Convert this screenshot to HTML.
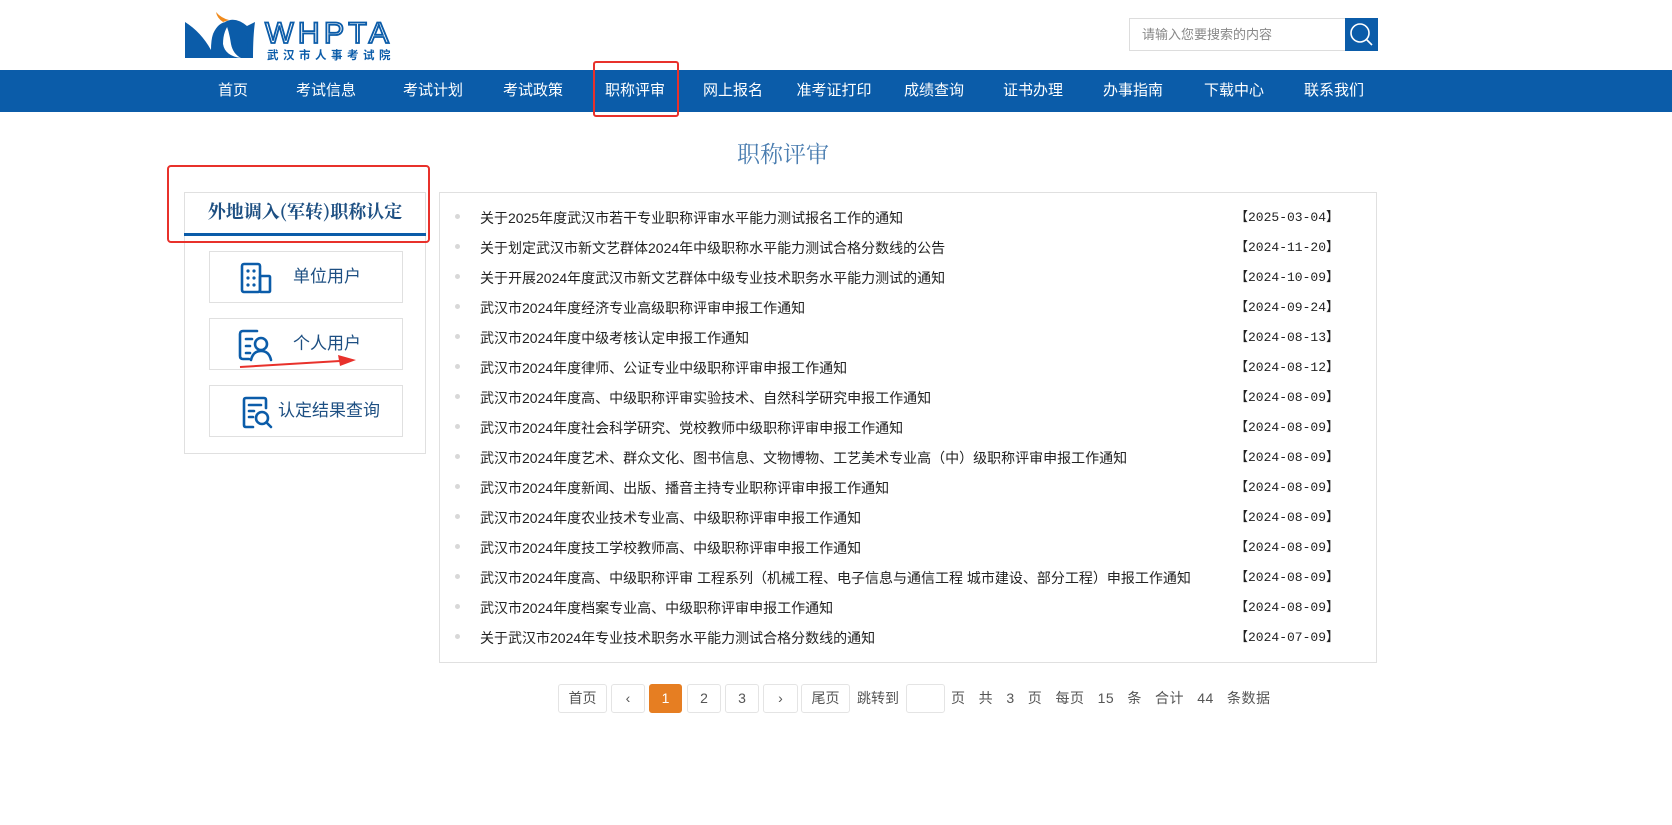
<!DOCTYPE html>
<html><head><meta charset="utf-8"><style>
*{margin:0;padding:0;box-sizing:border-box}
body{width:1672px;height:825px;background:#fff;font-family:"Liberation Sans","Noto Sans CJK SC",sans-serif;position:relative;overflow:hidden;color:#222}
.abs{position:absolute}
.nav{left:0;top:70px;width:1672px;height:42px;background:#0b5ca9}
.nav div{position:absolute;top:0;width:100px;height:42px;line-height:42px;text-align:center;color:#fff;font-size:15px}
.list{left:439px;top:192px;width:938px;height:471px;border:1px solid #e0e0e0}
.row{position:absolute;left:0;width:938px;height:30px;font-size:14px;line-height:30px}
.row .b{position:absolute;left:15px;top:11px;width:5px;height:5px;border-radius:50%;background:#d8d8d8}
.row .t{position:absolute;left:40px;top:0;white-space:nowrap}
.row .d{position:absolute;left:795px;top:0;white-space:nowrap;font-family:"Liberation Mono","Noto Sans CJK SC",monospace;font-size:13px}
.btn{position:absolute;left:209px;width:194px;height:52px;border:1px solid #e0e0e0;background:#fff}
.btn span{position:absolute;top:0;line-height:50px;font-size:17px;color:#1d4f82}
.pg{position:absolute;top:684px;height:29px;border:1px solid #e4e4e4;border-radius:3px;text-align:center;line-height:27px;font-size:14px;color:#555;background:#fff}
</style></head><body>
<svg class="abs" style="left:183px;top:10px" width="220" height="52" viewBox="0 0 220 52">
<path d="M2 12 Q18 22 28 40 Q28 30 30 24 Q36 38 46 48 L2 48 Z" fill="#0b5ca9"/>
<path d="M30 24 Q36 10 48 12 Q40 20 40 34 Q42 46 58 48 L46 48 Q34 40 30 24Z" fill="#0b5ca9"/>
<path d="M42 12 Q52 6 64 16 Q70 28 70 48 L58 48 Q50 44 48 34 Q46 20 42 12Z" fill="#0b5ca9"/>
<path d="M60 18 Q68 14 72 12 Q70 26 70 48 L62 48 Q68 36 60 18Z" fill="#0b5ca9"/>
<path d="M33 2 Q38 8 46 10 L40 12 Q34 8 33 2Z" fill="#f08a1c"/>
<text x="82" y="33" font-family="Liberation Sans" font-size="30" fill="#fff" stroke="#0b5ca9" stroke-width="1.8" letter-spacing="4" textLength="128" lengthAdjust="spacingAndGlyphs">WHPTA</text>
<text x="84" y="49" font-family="Noto Sans CJK SC" font-size="11.5" font-weight="bold" fill="#0b5ca9" letter-spacing="4.5">武汉市人事考试院</text>
</svg>
<div class="abs" style="left:1129px;top:18px;width:217px;height:33px;border:1px solid #ddd;font-size:13px;color:#888;line-height:31px;padding-left:12px">请输入您要搜索的内容</div>
<div class="abs" style="left:1345px;top:18px;width:33px;height:33px;background:#0b5ca9">
<svg width="33" height="33"><circle cx="15" cy="15" r="9" fill="none" stroke="#fff" stroke-width="1.6"/><line x1="21.5" y1="21.5" x2="27" y2="27" stroke="#fff" stroke-width="1.6"/></svg></div>
<div class="abs nav">
<div style="left:183px">首页</div><div style="left:276px">考试信息</div><div style="left:383px">考试计划</div><div style="left:483px">考试政策</div><div style="left:585px">职称评审</div><div style="left:683px">网上报名</div><div style="left:784px">准考证打印</div><div style="left:884px">成绩查询</div><div style="left:983px">证书办理</div><div style="left:1083px">办事指南</div><div style="left:1184px">下载中心</div><div style="left:1284px">联系我们</div>
</div>
<div class="abs" style="left:593px;top:61px;width:86px;height:56px;border:2px solid #e8312b;border-radius:3px"></div>
<div class="abs" style="left:683px;top:136px;width:200px;text-align:center;font-size:23px;color:#4a7db0;font-family:'Noto Serif CJK SC',serif">职称评审</div>
<div class="abs" style="left:184px;top:192px;width:242px;height:262px;border:1px solid #e0e0e0"></div>
<div class="abs" style="left:184px;top:198px;width:242px;text-align:center;font-size:18px;font-weight:bold;color:#1d4f82;font-family:'Noto Serif CJK SC',serif">外地调入(军转)职称认定</div>
<div class="abs" style="left:184px;top:233px;width:242px;height:3px;background:#0b5ca9"></div>
<div class="abs" style="left:167px;top:165px;width:263px;height:78px;border:2px solid #e8312b;border-radius:4px"></div>
<div class="btn" style="top:251px">
<svg class="abs" style="left:29px;top:9px" width="34" height="34" viewBox="0 0 34 34" fill="none" stroke="#0b5ca9" stroke-width="2.6"><rect x="3" y="3" width="18" height="28" rx="2"/><rect x="21" y="15" width="10" height="16" rx="1"/><g fill="#0b5ca9" stroke="none"><circle cx="9" cy="10" r="1.6"/><circle cx="15" cy="10" r="1.6"/><circle cx="9" cy="17" r="1.6"/><circle cx="15" cy="17" r="1.6"/><circle cx="9" cy="24" r="1.6"/><circle cx="15" cy="24" r="1.6"/></g></svg>
<span style="left:83px">单位用户</span></div>
<div class="btn" style="top:318px">
<svg class="abs" style="left:27px;top:9px" width="38" height="34" viewBox="0 0 38 34" fill="none" stroke="#0b5ca9" stroke-width="2.6" stroke-linecap="round"><path d="M20 3 H6 Q3 3 3 6 V28 Q3 31 6 31 H12"/><path d="M9 11 H15 M9 18 H13 M9 25 H13"/><circle cx="24" cy="16" r="6"/><path d="M14 32 Q16 23 24 23 Q32 23 34 32"/></svg>
<span style="left:83px">个人用户</span></div>
<div class="btn" style="top:385px">
<svg class="abs" style="left:31px;top:9px" width="34" height="36" viewBox="0 0 34 36" fill="none" stroke="#0b5ca9" stroke-width="2.6" stroke-linecap="round"><path d="M12 32 H5 Q3 32 3 30 V5 Q3 3 5 3 H23 Q25 3 25 5 V13"/><path d="M8 10 H20 M8 16 H13 M8 22 H12"/><circle cx="21" cy="23" r="6"/><path d="M25.5 27.5 L30 32"/></svg>
<span style="left:68px">认定结果查询</span></div>
<svg class="abs" style="left:238px;top:352px" width="122" height="20"><path d="M2 15 L102 9" stroke="#e8312b" stroke-width="2"/><path d="M118 8 L100 3 L102 14 Z" fill="#e8312b"/></svg>
<div class="abs list">
<div class="row" style="top:10px"><i class="b"></i><span class="t">关于2025年度武汉市若干专业职称评审水平能力测试报名工作的通知</span><span class="d">【2025-03-04】</span></div>
<div class="row" style="top:40px"><i class="b"></i><span class="t">关于划定武汉市新文艺群体2024年中级职称水平能力测试合格分数线的公告</span><span class="d">【2024-11-20】</span></div>
<div class="row" style="top:70px"><i class="b"></i><span class="t">关于开展2024年度武汉市新文艺群体中级专业技术职务水平能力测试的通知</span><span class="d">【2024-10-09】</span></div>
<div class="row" style="top:100px"><i class="b"></i><span class="t">武汉市2024年度经济专业高级职称评审申报工作通知</span><span class="d">【2024-09-24】</span></div>
<div class="row" style="top:130px"><i class="b"></i><span class="t">武汉市2024年度中级考核认定申报工作通知</span><span class="d">【2024-08-13】</span></div>
<div class="row" style="top:160px"><i class="b"></i><span class="t">武汉市2024年度律师、公证专业中级职称评审申报工作通知</span><span class="d">【2024-08-12】</span></div>
<div class="row" style="top:190px"><i class="b"></i><span class="t">武汉市2024年度高、中级职称评审实验技术、自然科学研究申报工作通知</span><span class="d">【2024-08-09】</span></div>
<div class="row" style="top:220px"><i class="b"></i><span class="t">武汉市2024年度社会科学研究、党校教师中级职称评审申报工作通知</span><span class="d">【2024-08-09】</span></div>
<div class="row" style="top:250px"><i class="b"></i><span class="t">武汉市2024年度艺术、群众文化、图书信息、文物博物、工艺美术专业高（中）级职称评审申报工作通知</span><span class="d">【2024-08-09】</span></div>
<div class="row" style="top:280px"><i class="b"></i><span class="t">武汉市2024年度新闻、出版、播音主持专业职称评审申报工作通知</span><span class="d">【2024-08-09】</span></div>
<div class="row" style="top:310px"><i class="b"></i><span class="t">武汉市2024年度农业技术专业高、中级职称评审申报工作通知</span><span class="d">【2024-08-09】</span></div>
<div class="row" style="top:340px"><i class="b"></i><span class="t">武汉市2024年度技工学校教师高、中级职称评审申报工作通知</span><span class="d">【2024-08-09】</span></div>
<div class="row" style="top:370px"><i class="b"></i><span class="t">武汉市2024年度高、中级职称评审 工程系列（机械工程、电子信息与通信工程 城市建设、部分工程）申报工作通知</span><span class="d">【2024-08-09】</span></div>
<div class="row" style="top:400px"><i class="b"></i><span class="t">武汉市2024年度档案专业高、中级职称评审申报工作通知</span><span class="d">【2024-08-09】</span></div>
<div class="row" style="top:430px"><i class="b"></i><span class="t">关于武汉市2024年专业技术职务水平能力测试合格分数线的通知</span><span class="d">【2024-07-09】</span></div>
</div>
<div class="pg" style="left:558px;width:49px">首页</div>
<div class="pg" style="left:611px;width:34px">‹</div>
<div class="pg" style="left:649px;width:33px;background:#e67e22;border-color:#e67e22;color:#fff">1</div>
<div class="pg" style="left:687px;width:34px">2</div>
<div class="pg" style="left:725px;width:34px">3</div>
<div class="pg" style="left:763px;width:35px">›</div>
<div class="pg" style="left:801px;width:49px">尾页</div>
<div class="abs" style="left:857px;top:684px;line-height:29px;font-size:14px;color:#555">跳转到</div>
<div class="pg" style="left:906px;width:39px"></div>
<div class="abs" style="left:951px;top:684px;line-height:29px;font-size:14px;color:#555;white-space:pre;letter-spacing:0.5px">页   共   3   页   每页   15   条   合计   44   条数据</div>
</body></html>
